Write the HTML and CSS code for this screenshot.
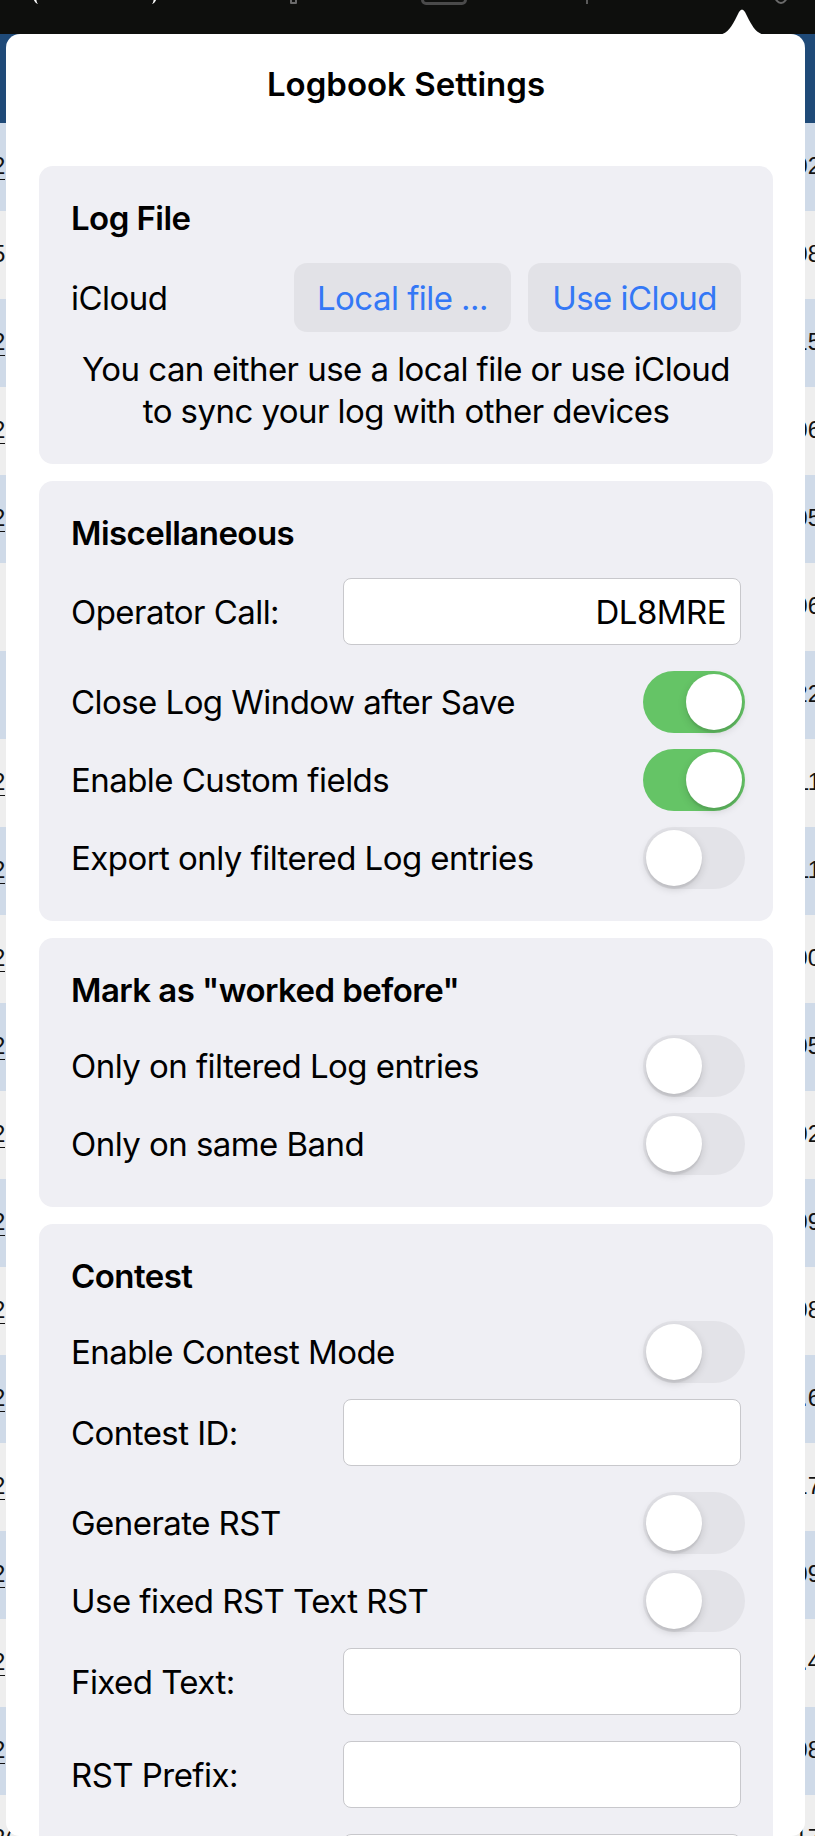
FILE: index.html
```html
<!DOCTYPE html>
<html>
<head>
<meta charset="utf-8">
<link rel="stylesheet" href="styles.css">
</head>
<body>
<div class="toolbar">
  <span class="tb tb-paren-l"></span>
  <span class="tb tb-paren-r"></span>
  <span class="tb tb-small"></span>
  <span class="tb tb-box"></span>
  <span class="tb tb-line"></span>
  <span class="tb tb-circle"></span>
</div>
<div class="navhead"></div>
<div class="table">
  <div class="trow"><span class="tl u">2</span><span class="tr">02</span></div>
  <div class="trow"><span class="tl">5</span><span class="tr">08</span></div>
  <div class="trow"><span class="tl u">2</span><span class="tr">15</span></div>
  <div class="trow"><span class="tl u">2</span><span class="tr">06</span></div>
  <div class="trow"><span class="tl u">2</span><span class="tr">05</span></div>
  <div class="trow"><span class="tl">(</span><span class="tr">06</span></div>
  <div class="trow"><span class="tl">(</span><span class="tr">22</span></div>
  <div class="trow"><span class="tl u">2</span><span class="tr">11</span></div>
  <div class="trow"><span class="tl u">2</span><span class="tr">11</span></div>
  <div class="trow"><span class="tl u">2</span><span class="tr">00</span></div>
  <div class="trow"><span class="tl u">2</span><span class="tr">05</span></div>
  <div class="trow"><span class="tl u">2</span><span class="tr">02</span></div>
  <div class="trow"><span class="tl u">2</span><span class="tr">09</span></div>
  <div class="trow"><span class="tl u">2</span><span class="tr">08</span></div>
  <div class="trow"><span class="tl u">2</span><span class="tr">.6</span></div>
  <div class="trow"><span class="tl u">2</span><span class="tr">17</span></div>
  <div class="trow"><span class="tl u">2</span><span class="tr">09</span></div>
  <div class="trow"><span class="tl u">2</span><span class="tr">.4</span></div>
  <div class="trow"><span class="tl u">2</span><span class="tr">08</span></div>
  <div class="trow"><span class="tl">2(</span><span class="tr">17</span></div>
</div>

<svg class="arrow" width="52" height="28" viewBox="0 0 52 28"><path d="M0 28 C10 28 14 22 19 13 L23 5 Q26 0 29 5 L33 13 C38 22 42 28 52 28 Z" fill="#fff"/></svg>
<div class="popover">
  <h1 class="title">Logbook Settings</h1>

  <section class="card">
    <h2 class="card-title">Log File</h2>
    <div class="item btn-row">
      <span class="label">iCloud</span>
      <span class="btn btn-local">Local file ...</span>
      <span class="btn btn-icloud">Use iCloud</span>
    </div>
    <p class="note">You can either use a local file or use iCloud<br>to sync your log with other devices</p>
  </section>

  <section class="card">
    <h2 class="card-title">Miscellaneous</h2>
    <div class="item field-row">
      <span class="label">Operator Call:</span>
      <span class="field">DL8MRE</span>
    </div>
    <div class="item switch-row">
      <span class="label">Close Log Window after Save</span>
      <span class="switch on"><span class="knob"></span></span>
    </div>
    <div class="item switch-row">
      <span class="label">Enable Custom fields</span>
      <span class="switch on"><span class="knob"></span></span>
    </div>
    <div class="item switch-row">
      <span class="label">Export only filtered Log entries</span>
      <span class="switch"><span class="knob"></span></span>
    </div>
  </section>

  <section class="card">
    <h2 class="card-title">Mark as "worked before"</h2>
    <div class="item switch-row">
      <span class="label">Only on filtered Log entries</span>
      <span class="switch"><span class="knob"></span></span>
    </div>
    <div class="item switch-row">
      <span class="label">Only on same Band</span>
      <span class="switch"><span class="knob"></span></span>
    </div>
  </section>

  <section class="card">
    <h2 class="card-title">Contest</h2>
    <div class="item switch-row">
      <span class="label">Enable Contest Mode</span>
      <span class="switch"><span class="knob"></span></span>
    </div>
    <div class="item field-row">
      <span class="label">Contest ID:</span>
      <span class="field"></span>
    </div>
    <div class="item switch-row">
      <span class="label">Generate RST</span>
      <span class="switch"><span class="knob"></span></span>
    </div>
    <div class="item switch-row">
      <span class="label">Use fixed RST Text RST</span>
      <span class="switch"><span class="knob"></span></span>
    </div>
    <div class="item field-row">
      <span class="label">Fixed Text:</span>
      <span class="field"></span>
    </div>
    <div class="item field-row">
      <span class="label">RST Prefix:</span>
      <span class="field"></span>
    </div>
    <div class="item field-row">
      <span class="label">RST Suffix:</span>
      <span class="field"></span>
    </div>
  </section>
</div>
</body>
</html>
```

FILE: styles.css
```css
* { box-sizing: border-box; }
html, body { margin: 0; padding: 0; }
body {
  width: 815px;
  height: 1836px;
  overflow: hidden;
  position: relative;
  background: #eeeeee;
  font-family: Inter, "Noto Sans", sans-serif;
  color: #000;
}

/* background app */
.toolbar {
  height: 34px;
  background: #0e0f0d;
  display: flex;
  align-items: flex-start;
  overflow: hidden;
}
.tb { display: block; flex: none; }
.tb-paren-l {
  margin-left: 33px; margin-top: -16px;
  width: 10px; height: 20px;
  border-left: 3px solid #fff; border-radius: 50%;
}
.tb-paren-r {
  margin-left: 104px; margin-top: -16px;
  width: 10px; height: 20px;
  border-right: 3px solid #fff; border-radius: 50%;
}
.tb-small {
  margin-left: 133px; margin-top: -16px;
  width: 7px; height: 20px;
  border: 2px solid #6a6a6a; border-radius: 1px;
}
.tb-box {
  margin-left: 124px; margin-top: -16px;
  width: 46px; height: 21px;
  border: 3px solid #4a4a4a; border-radius: 5px;
}
.tb-line {
  margin-left: 119px; margin-top: -16px;
  width: 2px; height: 20px;
  background: #5a5a5a;
}
.tb-circle {
  margin-left: 186px; margin-top: -14px;
  width: 14px; height: 18px;
  border: 2px solid #6a6a6a; border-radius: 50%;
}
.navhead { height: 89px; background: #1f4a78; }
.trow {
  height: 88px;
  display: flex;
  justify-content: space-between;
  align-items: flex-start;
  padding-top: 30px;
  font-family: "Liberation Sans", Arial, sans-serif;
  font-size: 24px;
  line-height: 26px;
  color: #111;
}
.trow:nth-child(odd) { background: #cfdae8; }
.trow:nth-child(even) { background: #eeeeee; }
.tl { margin-left: -8px; }
.tl.u { border-bottom: 1px solid #111; }
.tr { margin-right: -6px; }

/* popover */
.arrow { position: absolute; left: 716px; top: 7px; }
.popover {
  position: absolute;
  left: 6px;
  top: 34px;
  width: 799px;
  height: 1802px;
  background: #fff;
  border-radius: 14px;
  padding: 30px 32px 0 33px;
  overflow: hidden;
  letter-spacing: -0.55px;
}
.title {
  margin: 0 0 62px;
  font-size: 33px;
  font-weight: 600;
  line-height: 40px;
  text-align: center;
  letter-spacing: 0;
}
.card {
  background: #efeff4;
  border-radius: 14px;
  padding: 32px;
  display: flex;
  flex-direction: column;
  gap: 16px;
  margin-bottom: 17px;
}
.card-title {
  margin: 0 0 9px;
  font-size: 33px;
  font-weight: 600;
  line-height: 40px;
}
.item {
  display: flex;
  align-items: center;
  font-size: 33px;
  line-height: 40px;
}
.label { flex: 1; white-space: nowrap; }
.btn-row { height: 69px; gap: 17px; }
.btn {
  height: 69px;
  display: flex;
  align-items: center;
  justify-content: center;
  background: #e2e2e7;
  border-radius: 13px;
  color: #3478f6;
  white-space: nowrap;
}
.btn-local { width: 217px; }
.btn-icloud { width: 213px; }
.note {
  margin: 0;
  font-size: 33px;
  line-height: 42px;
  text-align: center;
  white-space: nowrap;
}
.field-row { height: 67px; margin-bottom: 10px; }
.field {
  width: 398px;
  height: 67px;
  background: #fff;
  border: 1px solid #c8c8cc;
  border-radius: 8px;
  display: flex;
  align-items: center;
  justify-content: flex-end;
  padding: 0 14px;
}
.switch-row { height: 62px; }
.switch {
  width: 102px;
  height: 62px;
  border-radius: 31px;
  background: #e3e3e8;
  position: relative;
  margin-right: -4px;
  flex: none;
}
.switch.on { background: #65c466; }
.knob {
  position: absolute;
  top: 3px;
  left: 3px;
  width: 56px;
  height: 56px;
  border-radius: 50%;
  background: #fff;
  box-shadow: 0 3px 8px rgba(0,0,0,0.15), 0 3px 1px rgba(0,0,0,0.06);
}
.switch.on .knob { left: 43px; }
```
